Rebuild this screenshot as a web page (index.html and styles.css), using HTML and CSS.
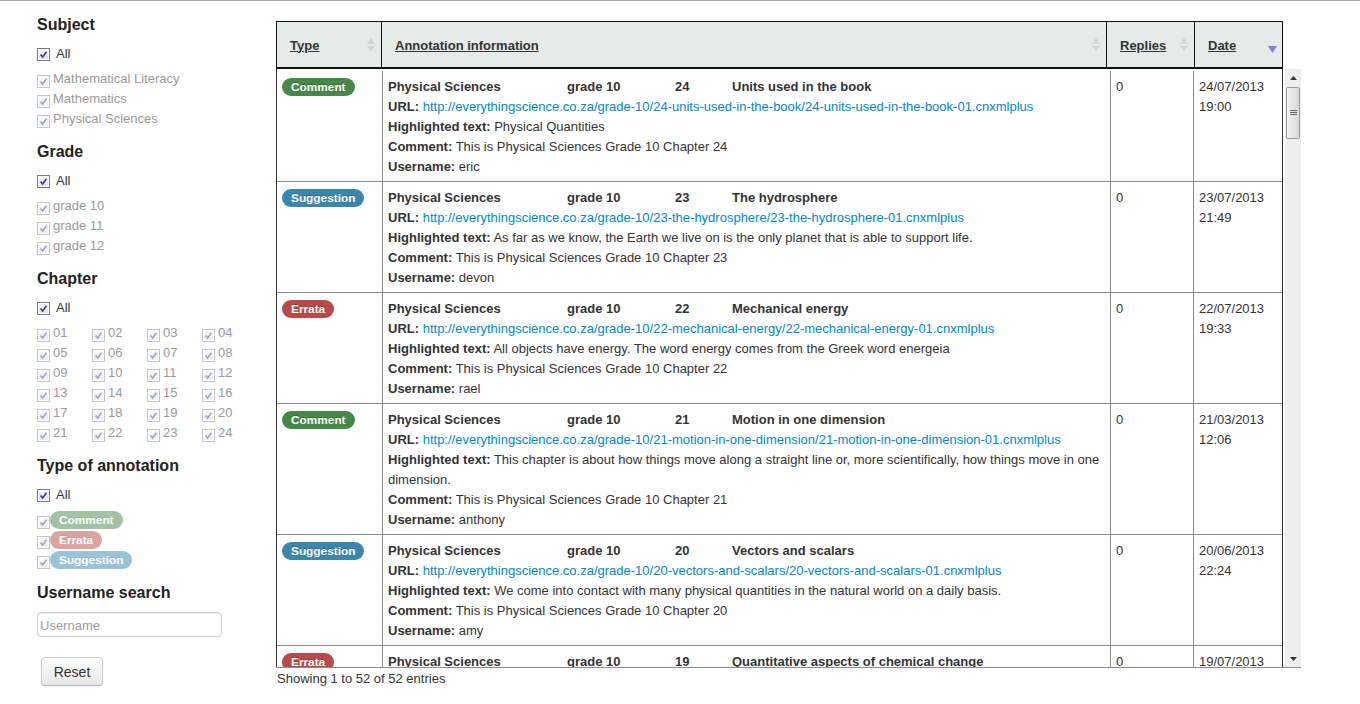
FILE: index.html
```html
<!DOCTYPE html>
<html lang="en">
<head>
<meta charset="utf-8">
<title>Annotations</title>
<link rel="stylesheet" href="styles.css">
</head>
<body>
<div class="page">
  <aside class="sidebar">
    <section class="section">
      <h3>Subject</h3>
      <div class="opt-all"><span class="cb"><svg viewBox="0 0 13 13"><path d="M3 6.5 5.5 9.5 10 3.2"/></svg></span><span class="lbl">All</span></div>
      <div class="opts">
        <div class="opt"><span class="cb dis"><svg viewBox="0 0 13 13"><path d="M3 6.5 5.5 9.5 10 3.2"/></svg></span>Mathematical Literacy</div>
        <div class="opt"><span class="cb dis"><svg viewBox="0 0 13 13"><path d="M3 6.5 5.5 9.5 10 3.2"/></svg></span>Mathematics</div>
        <div class="opt"><span class="cb dis"><svg viewBox="0 0 13 13"><path d="M3 6.5 5.5 9.5 10 3.2"/></svg></span>Physical Sciences</div>
      </div>
    </section>
    <section class="section">
      <h3>Grade</h3>
      <div class="opt-all"><span class="cb"><svg viewBox="0 0 13 13"><path d="M3 6.5 5.5 9.5 10 3.2"/></svg></span><span class="lbl">All</span></div>
      <div class="opts">
        <div class="opt"><span class="cb dis"><svg viewBox="0 0 13 13"><path d="M3 6.5 5.5 9.5 10 3.2"/></svg></span>grade 10</div>
        <div class="opt"><span class="cb dis"><svg viewBox="0 0 13 13"><path d="M3 6.5 5.5 9.5 10 3.2"/></svg></span>grade 11</div>
        <div class="opt"><span class="cb dis"><svg viewBox="0 0 13 13"><path d="M3 6.5 5.5 9.5 10 3.2"/></svg></span>grade 12</div>
      </div>
    </section>
    <section class="section">
      <h3>Chapter</h3>
      <div class="opt-all"><span class="cb"><svg viewBox="0 0 13 13"><path d="M3 6.5 5.5 9.5 10 3.2"/></svg></span><span class="lbl">All</span></div>
      <div class="opts grid4" id="chapters"></div>
    </section>
    <section class="section">
      <h3>Type of annotation</h3>
      <div class="opt-all"><span class="cb"><svg viewBox="0 0 13 13"><path d="M3 6.5 5.5 9.5 10 3.2"/></svg></span><span class="lbl">All</span></div>
      <div class="opts">
        <div class="opt opt-badge"><span class="cb dis"><svg viewBox="0 0 13 13"><path d="M3 6.5 5.5 9.5 10 3.2"/></svg></span><span class="badge b-comment faded">Comment</span></div>
        <div class="opt opt-badge"><span class="cb dis"><svg viewBox="0 0 13 13"><path d="M3 6.5 5.5 9.5 10 3.2"/></svg></span><span class="badge b-errata faded">Errata</span></div>
        <div class="opt opt-badge"><span class="cb dis"><svg viewBox="0 0 13 13"><path d="M3 6.5 5.5 9.5 10 3.2"/></svg></span><span class="badge b-suggestion faded">Suggestion</span></div>
      </div>
    </section>
    <section class="search">
      <h3>Username search</h3>
      <input class="user-input" type="text" placeholder="Username">
      <button class="btn" type="button">Reset</button>
    </section>
  </aside>

  <main class="main">
    <div class="dt">
      <div class="dt-head">
        <div class="th"><span class="th-label">Type</span><svg class="sort" viewBox="0 0 8 16"><path d="M0 7 4 1 8 7Z M0 9 8 9 4 15Z"/></svg></div>
        <div class="th"><span class="th-label">Annotation information</span><svg class="sort" viewBox="0 0 8 16"><path d="M0 7 4 1 8 7Z M0 9 8 9 4 15Z"/></svg></div>
        <div class="th"><span class="th-label">Replies</span><svg class="sort" viewBox="0 0 8 16"><path d="M0 7 4 1 8 7Z M0 9 8 9 4 15Z"/></svg></div>
        <div class="th"><span class="th-label">Date</span><svg class="sort-desc" viewBox="0 0 9 8"><path d="M0 0 9 0 4.5 7Z"/></svg></div>
      </div>
      <div class="dt-body">
        <div class="dt-clip">
          <div class="row">
            <div class="c c-type"><span class="badge b-comment">Comment</span></div>
            <div class="c c-info">
              <div class="meta"><span class="m-subj">Physical Sciences</span><span class="m-grade">grade 10</span><span class="m-ch">24</span><span>Units used in the book</span></div>
              <div><b>URL:</b> <a href="#">http://everythingscience.co.za/grade-10/24-units-used-in-the-book/24-units-used-in-the-book-01.cnxmlplus</a></div>
              <div><b>Highlighted text:</b> Physical Quantities</div>
              <div><b>Comment:</b> This is Physical Sciences Grade 10 Chapter 24</div>
              <div><b>Username:</b> eric</div>
            </div>
            <div class="c c-rep">0</div>
            <div class="c c-date">24/07/2013<br>19:00</div>
          </div>
          <div class="row">
            <div class="c c-type"><span class="badge b-suggestion">Suggestion</span></div>
            <div class="c c-info">
              <div class="meta"><span class="m-subj">Physical Sciences</span><span class="m-grade">grade 10</span><span class="m-ch">23</span><span>The hydrosphere</span></div>
              <div><b>URL:</b> <a href="#">http://everythingscience.co.za/grade-10/23-the-hydrosphere/23-the-hydrosphere-01.cnxmlplus</a></div>
              <div><b>Highlighted text:</b> As far as we know, the Earth we live on is the only planet that is able to support life.</div>
              <div><b>Comment:</b> This is Physical Sciences Grade 10 Chapter 23</div>
              <div><b>Username:</b> devon</div>
            </div>
            <div class="c c-rep">0</div>
            <div class="c c-date">23/07/2013<br>21:49</div>
          </div>
          <div class="row">
            <div class="c c-type"><span class="badge b-errata">Errata</span></div>
            <div class="c c-info">
              <div class="meta"><span class="m-subj">Physical Sciences</span><span class="m-grade">grade 10</span><span class="m-ch">22</span><span>Mechanical energy</span></div>
              <div><b>URL:</b> <a href="#">http://everythingscience.co.za/grade-10/22-mechanical-energy/22-mechanical-energy-01.cnxmlplus</a></div>
              <div><b>Highlighted text:</b> All objects have energy. The word energy comes from the Greek word energeia</div>
              <div><b>Comment:</b> This is Physical Sciences Grade 10 Chapter 22</div>
              <div><b>Username:</b> rael</div>
            </div>
            <div class="c c-rep">0</div>
            <div class="c c-date">22/07/2013<br>19:33</div>
          </div>
          <div class="row">
            <div class="c c-type"><span class="badge b-comment">Comment</span></div>
            <div class="c c-info">
              <div class="meta"><span class="m-subj">Physical Sciences</span><span class="m-grade">grade 10</span><span class="m-ch">21</span><span>Motion in one dimension</span></div>
              <div><b>URL:</b> <a href="#">http://everythingscience.co.za/grade-10/21-motion-in-one-dimension/21-motion-in-one-dimension-01.cnxmlplus</a></div>
              <div><b>Highlighted text:</b> This chapter is about how things move along a straight line or, more scientifically, how things move in one dimension.</div>
              <div><b>Comment:</b> This is Physical Sciences Grade 10 Chapter 21</div>
              <div><b>Username:</b> anthony</div>
            </div>
            <div class="c c-rep">0</div>
            <div class="c c-date">21/03/2013<br>12:06</div>
          </div>
          <div class="row">
            <div class="c c-type"><span class="badge b-suggestion">Suggestion</span></div>
            <div class="c c-info">
              <div class="meta"><span class="m-subj">Physical Sciences</span><span class="m-grade">grade 10</span><span class="m-ch">20</span><span>Vectors and scalars</span></div>
              <div><b>URL:</b> <a href="#">http://everythingscience.co.za/grade-10/20-vectors-and-scalars/20-vectors-and-scalars-01.cnxmlplus</a></div>
              <div><b>Highlighted text:</b> We come into contact with many physical quantities in the natural world on a daily basis.</div>
              <div><b>Comment:</b> This is Physical Sciences Grade 10 Chapter 20</div>
              <div><b>Username:</b> amy</div>
            </div>
            <div class="c c-rep">0</div>
            <div class="c c-date">20/06/2013<br>22:24</div>
          </div>
          <div class="row">
            <div class="c c-type"><span class="badge b-errata">Errata</span></div>
            <div class="c c-info">
              <div class="meta"><span class="m-subj">Physical Sciences</span><span class="m-grade">grade 10</span><span class="m-ch">19</span><span>Quantitative aspects of chemical change</span></div>
              <div><b>URL:</b> <a href="#">http://everythingscience.co.za/grade-10/19-quantitative-aspects-of-chemical-change/19-quantitative-aspects-of-chemical-change-01.cnxmlplus</a></div>
              <div><b>Highlighted text:</b> The mole</div>
              <div><b>Comment:</b> This is Physical Sciences Grade 10 Chapter 19</div>
              <div><b>Username:</b> eric</div>
            </div>
            <div class="c c-rep">0</div>
            <div class="c c-date">19/07/2013<br>10:12</div>
          </div>
        </div>
        <div class="sb">
          <div class="sb-btn"><svg viewBox="0 0 7 4"><path d="M0 4 3.5 0 7 4Z"/></svg></div>
          <div class="sb-track">
            <div class="sb-thumb"><svg viewBox="0 0 7 6"><path d="M0 0.5H7M0 2.5H7M0 4.5H7"/></svg></div>
          </div>
          <div class="sb-btn"><svg viewBox="0 0 7 4"><path d="M0 0 7 0 3.5 4Z"/></svg></div>
        </div>
      </div>
      <div class="dt-info">Showing 1 to 52 of 52 entries</div>
    </div>
  </main>
</div>
<script>
(function(){
  var box = document.getElementById('chapters');
  var svg = '<span class="cb dis"><svg viewBox="0 0 13 13"><path d="M3 6.5 5.5 9.5 10 3.2"/></svg></span>';
  var html = '';
  for (var i = 1; i <= 24; i++) {
    var n = i < 10 ? '0' + i : '' + i;
    html += '<div class="opt">' + svg + n + '</div>';
  }
  box.innerHTML = html;
})();
</script>
</body>
</html>
```

FILE: styles.css
```css
* { box-sizing: border-box; }
html, body { margin: 0; }
body {
  border-top: 1px solid #a9a9a9;
  font-family: "Liberation Sans", Arial, sans-serif;
  font-size: 13px;
  line-height: 20px;
  color: #333;
  background: #fff;
}
.page { display: flex; align-items: flex-start; }

/* Sidebar */
.sidebar { width: 276px; flex: none; padding: 14px 0 0 37px; }
.sidebar h3 { margin: 0; font-size: 16px; line-height: 20px; font-weight: bold; color: #222; }
.section { margin-bottom: 13px; }
.opt-all { display: flex; align-items: center; height: 20px; margin-top: 9px; color: #333; }
.opt-all .lbl { margin-left: 6px; }
.opts { margin-top: 5px; }
.opt { display: flex; align-items: center; height: 20px; color: #999; }
.opt .cb { margin-top: 5px; margin-right: 3px; }
.opt-badge .cb { margin-right: 0; }
.grid4 { display: grid; grid-template-columns: repeat(4, 55px); }

.cb {
  width: 13px; height: 13px; flex: none; display: inline-flex;
  border: 1px solid #7a7a7a;
  background: linear-gradient(#f6f6f6, #dedede);
  box-shadow: inset 0 0 0 1px #fff;
}
.cb svg { width: 11px; height: 11px; }
.cb svg path { fill: none; stroke: #2f3f8f; stroke-width: 1.9; }
.cb.dis { border-color: #c4c4c4; background: linear-gradient(#fafafa, #ececec); }
.cb.dis svg path { stroke: #9aa3cc; }

.user-input {
  display: block; margin-top: 9px; width: 185px; height: 25px;
  border: 1px solid #cccccc; border-radius: 4px; padding: 1px 2px 0;
  box-shadow: inset 0 1px 1px rgba(0,0,0,0.075);
  font: 13px "Liberation Sans", Arial, sans-serif; color: #555;
}
.user-input::placeholder { color: #999; }
.btn {
  display: block; margin: 20px 0 0 4px; width: 62px; height: 29px;
  border: 1px solid #cccccc; border-bottom-color: #b3b3b3; border-radius: 4px;
  background: linear-gradient(#ffffff, #e6e6e6);
  box-shadow: inset 0 1px 0 rgba(255,255,255,0.2), 0 1px 2px rgba(0,0,0,0.05);
  font: 14px "Liberation Sans", Arial, sans-serif; color: #333; padding: 0;
}

/* Badges */
.badge {
  display: inline-block; padding: 2px 9px; border-radius: 9px;
  font-size: 11.844px; line-height: 14px; font-weight: bold; color: #fff;
  text-shadow: 0 -1px 0 rgba(0,0,0,0.25); white-space: nowrap;
}
.b-comment { background: #468847; }
.b-errata { background: #b94a48; }
.b-suggestion { background: #3a87ad; }
.faded { opacity: 0.5; }

/* Table */
.main { flex: none; padding-top: 20px; }
.dt { width: 1025px; }
.dt-head {
  width: 1007px; display: grid;
  grid-template-columns: 105px 725px 88px 87px;
  border: 1px solid #111; border-bottom: 2px solid #111;
  background: #e4ebe9;
}
.th {
  height: 45px; display: flex; align-items: center; justify-content: space-between;
  padding: 2px 6px 0 13px; border-right: 1px solid #111; font-weight: bold; color: #333;
}
.th:last-child { border-right: none; padding-right: 5px; }
.th-label { text-decoration: underline; }
.sort { width: 8px; height: 16px; fill: #d4d4d4; margin-top: -2px; }
.sort-desc { width: 9px; height: 8px; fill: #7c82dd; margin-top: 8px; }

.dt-body { display: flex; height: 599px; border-bottom: 1px solid #8a8a8a; }
.dt-clip {
  width: 1007px; flex: none; overflow: hidden; padding-top: 2px;
  border-left: 1px solid #333; border-right: 1px solid #333;
}
.row { display: grid; grid-template-columns: 106px 728px 83px 88px; }
.c { padding: 6px 5px 4px; border-bottom: 1px solid #8a8a8a; border-right: 1px solid #8a8a8a; }
.c-date { border-right: none; }
.c-type { padding-top: 5px; padding-bottom: 5px; }
.c-type .badge { margin-top: 2px; vertical-align: top; }
.meta { font-weight: bold; }
.meta span { display: inline-block; }
.m-subj { width: 179px; }
.m-grade { width: 108px; }
.m-ch { width: 57px; }
.c-info a { color: #0088cc; text-decoration: none; }

/* Fake scrollbar */
.sb { width: 16px; margin-left: 2px; flex: none; background: #eeeeee; display: flex; flex-direction: column; }
.sb-btn { height: 17px; display: flex; align-items: center; justify-content: center; }
.sb-btn svg { width: 7px; height: 4px; fill: #333; }
.sb-track { flex: 1; }
.sb-thumb {
  margin: 1px 1px 0; height: 52px; border: 1px solid #9c9c9c; border-radius: 2px;
  background: linear-gradient(to right, #f2f2f2, #d8d8d8);
  display: flex; align-items: center; justify-content: center;
}
.sb-thumb svg { width: 7px; height: 6px; }
.sb-thumb svg path { stroke: #666; stroke-width: 1; fill: none; }

.dt-info { padding: 1px 0 0 1px; line-height: 20px; color: #333; }
```
